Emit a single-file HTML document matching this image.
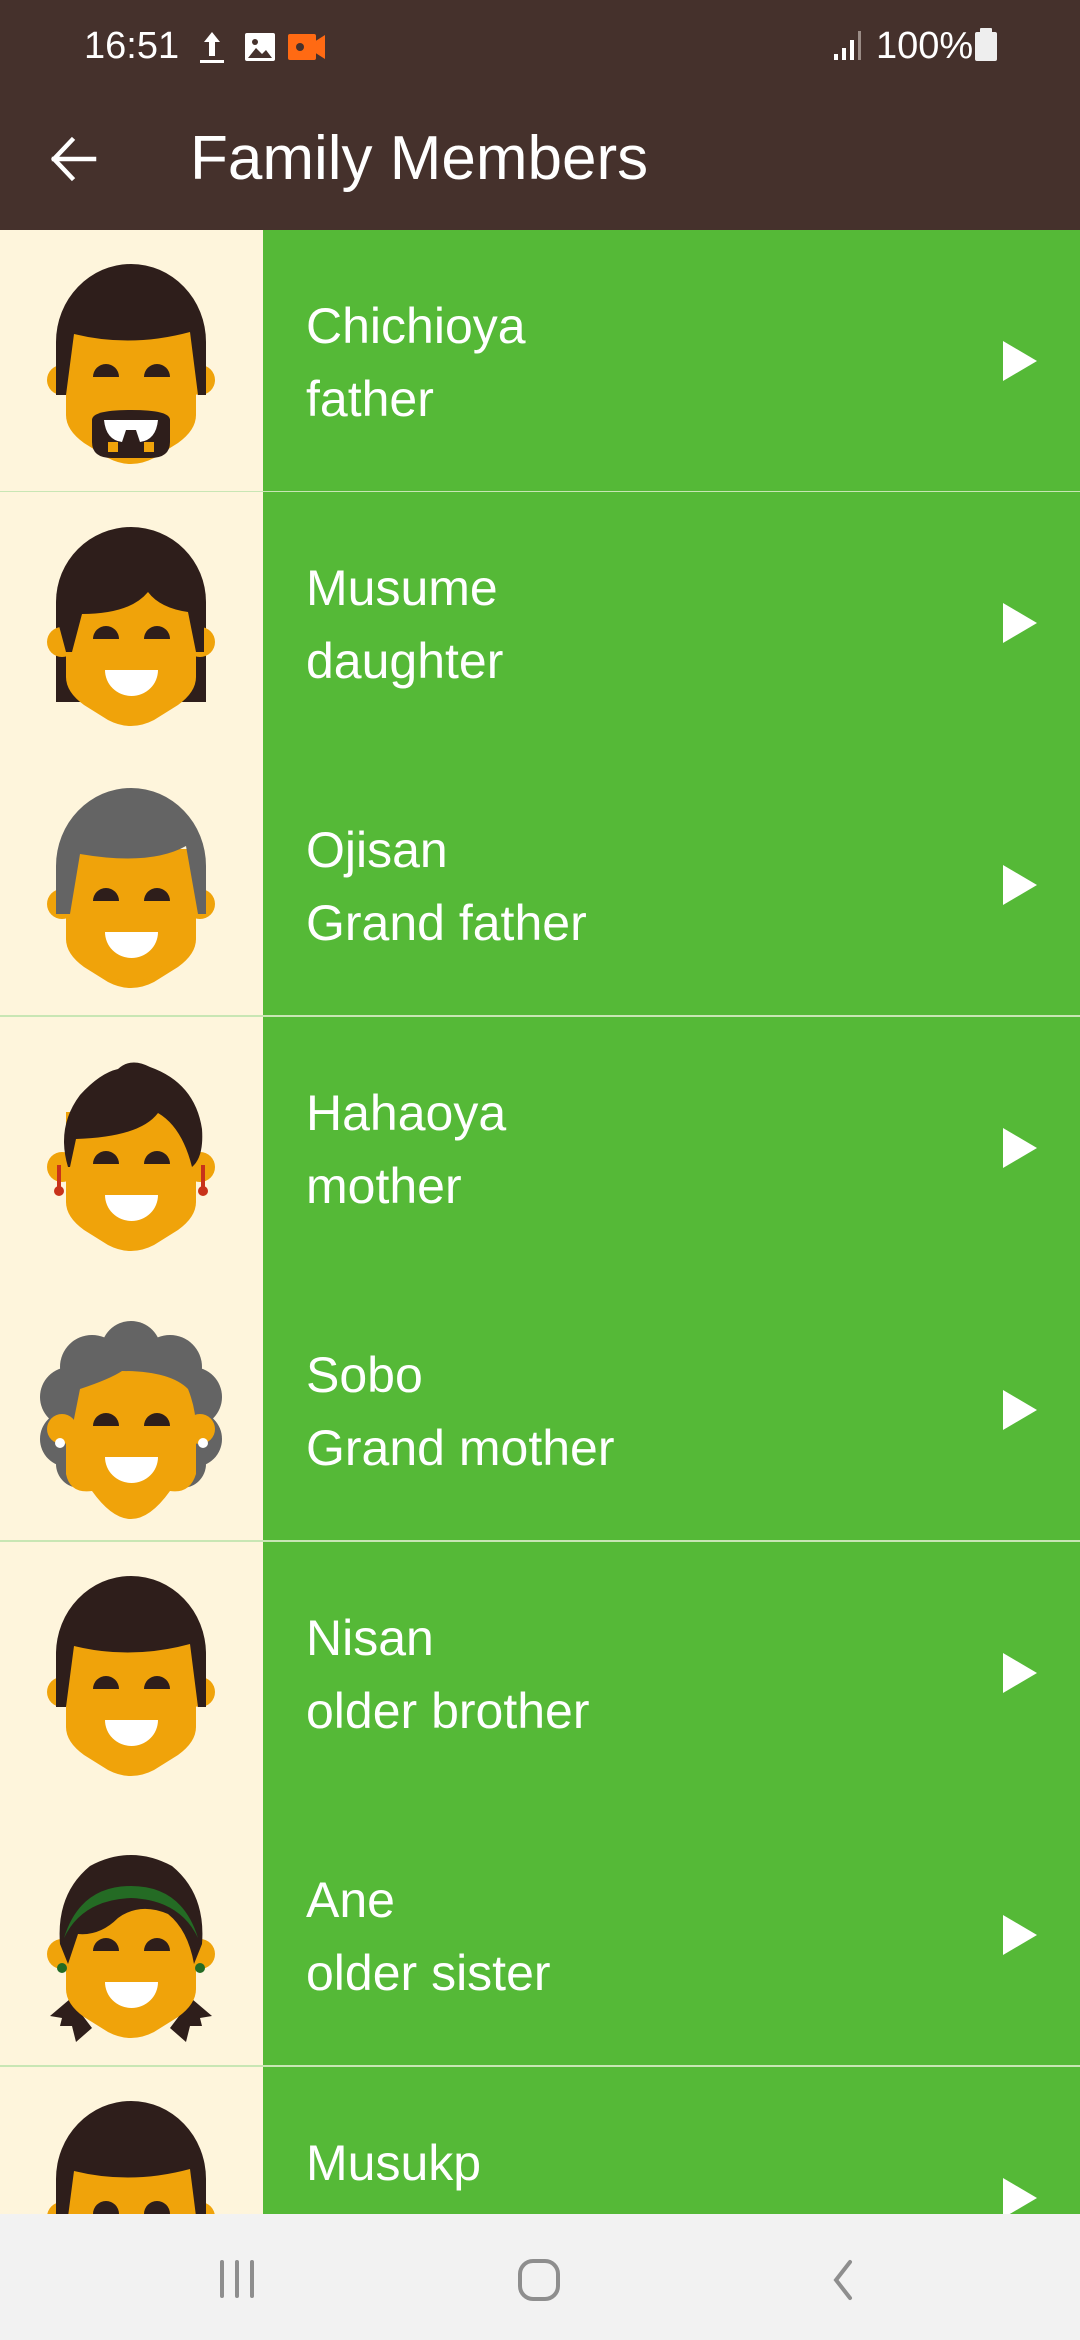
<!DOCTYPE html>
<html><head><meta charset="utf-8"><style>
*{margin:0;padding:0;box-sizing:border-box}
body{width:1080px;height:2340px;overflow:hidden;background:#fef5dc;font-family:"Liberation Sans",Roboto,sans-serif;position:relative}
.top{position:absolute;left:0;top:0;width:1080px;height:230px;background:#45312c;color:#fff}
.row{position:absolute;left:0;width:1080px;height:263px}
.left{position:absolute;left:0;top:0;width:263px;height:100%;background:#fef5dc}
.right{position:absolute;left:263px;top:0;width:817px;height:100%;background:#55b937}
.t1,.t2{position:absolute;left:306px;color:#fff;font-size:50px;white-space:nowrap}
.t1{top:67px}.t2{top:140px}
.tri{position:absolute;left:1003px;top:111px;width:0;height:0;border-top:20px solid transparent;border-bottom:20px solid transparent;border-left:34px solid #fff}
.div{position:absolute;left:0;bottom:0;width:1080px;height:2px;background:#c8e6b4}
svg.f{position:absolute;left:0;top:0}
.nav{position:absolute;left:0;top:2214px;width:1080px;height:126px;background:#f2f2f2}
</style></head><body>
<div class="top">
 <div style="position:absolute;left:84px;top:25px;font-size:38px;">16:51</div>
 <svg style="position:absolute;left:198px;top:30px" width="28" height="34"><path d="M14 2 L6 12 H11 V26 H17 V12 H22 Z" fill="#fff"/><rect x="2" y="30" width="24" height="3" fill="#fff"/></svg>
 <svg style="position:absolute;left:244px;top:32px" width="32" height="30"><rect x="1" y="1" width="30" height="28" rx="2" fill="#fff"/><path d="M4 26 L12 16 L18 22 L22 18 L28 26 Z" fill="#45312c"/><circle cx="11" cy="10" r="3" fill="#45312c"/></svg>
 <svg style="position:absolute;left:288px;top:34px" width="38" height="26"><rect x="0" y="0" width="28" height="26" rx="2" fill="#ff6a13"/><path d="M26 8 L37 1 V25 L26 18 Z" fill="#ff6a13"/><circle cx="12" cy="13" r="4" fill="#45312c"/></svg>
 <svg style="position:absolute;left:832px;top:30px" width="32" height="32"><rect x="2" y="24" width="4" height="6" fill="#fff"/><rect x="10" y="18" width="4" height="12" fill="#fff"/><rect x="18" y="10" width="4" height="20" fill="#fff"/><rect x="26" y="1" width="3" height="29" fill="#9a8c86"/></svg>
 <div style="position:absolute;left:876px;top:25px;font-size:38px;">100%</div>
 <svg style="position:absolute;left:974px;top:26px" width="24" height="36"><rect x="6" y="2" width="12" height="6" rx="1" fill="#eee"/><rect x="1" y="6" width="22" height="29" rx="2" fill="#eee"/></svg>
 <svg style="position:absolute;left:50px;top:136px" width="48" height="46"><path d="M22 4 L4 23 L22 42 M4 23 H44" stroke="#fff" stroke-width="4.5" fill="none" stroke-linecap="square"/></svg>
 <div style="position:absolute;left:190px;top:123px;font-size:62px;">Family Members</div>
</div>

<svg width="0" height="0" style="position:absolute">
 <defs>
  <g id="base">
   <circle cx="62" cy="150" r="15" fill="#f0a30a"/><circle cx="200" cy="150" r="15" fill="#f0a30a"/>
   <path d="M66,95 L66,185 Q66,200 84,213 L108,228 Q131,240 154,228 L178,213 Q196,200 196,185 L196,95 Z" fill="#f0a30a"/>
   <path d="M93,147 A13,13 0 0 1 119,147 Z M144,147 A13,13 0 0 1 170,147 Z" fill="#2e1e1b"/>
  </g>
  <path id="mouth" d="M105,178 H158 A26.5,26 0 0 1 105,178 Z" fill="#fff"/>
  <g id="boyhair"><path d="M56,165 L56,112 A75,78 0 0 1 206,112 L206,165 L198,165 L190,102 Q131,118 74,104 L66,165 Z" fill="#2e1e1b"/></g>
 </defs>
</svg>

<div class="row" style="top:230px"><div class="left"></div><div class="right"></div>
<svg class="f" width="263" height="263"><use href="#base"/><use href="#boyhair"/>
<path d="M92,190 Q92,180 131,180 Q170,180 170,190 L170,212 Q170,228 150,228 L112,228 Q92,228 92,212 Z" fill="#2e1e1b"/>
<path d="M104,190 H158 Q156,210 140,212 L136,200 L126,200 L122,212 Q106,210 104,190 Z" fill="#fff"/>
<path d="M108,212 L108,222 L118,222 L118,212 Z M144,212 L144,222 L154,222 L154,212 Z" fill="#f0a30a"/></svg>
<div class="t1">Chichioya</div><div class="t2">father</div><div class="tri"></div><div class="div"></div></div>

<div class="row" style="top:492px"><div class="left"></div><div class="right"></div>
<svg class="f" width="263" height="263"><path d="M56,210 L56,110 A75,75 0 0 1 206,110 L206,210 Z" fill="#2e1e1b"/><use href="#base"/>
<path d="M58,130 L58,110 A73,73 0 0 1 204,110 L204,160 L196,160 L188,120 Q160,116 148,100 Q130,122 82,122 L72,160 L66,160 Z" fill="#2e1e1b"/><use href="#mouth"/></svg>
<div class="t1">Musume</div><div class="t2">daughter</div><div class="tri"></div></div>

<div class="row" style="top:754px"><div class="left"></div><div class="right"></div>
<svg class="f" width="263" height="263"><use href="#base"/>
<path d="M56,160 L56,112 A75,78 0 0 1 206,112 L206,160 L198,160 L186,92 Q150,112 80,100 L70,160 Z" fill="#646464"/>
<path d="M66,180 Q66,210 100,212 L112,222 Q131,236 150,222 L162,212 Q196,210 196,180 Z" fill="#f0a30a"/><use href="#mouth"/></svg>
<div class="t1">Ojisan</div><div class="t2">Grand father</div><div class="tri"></div><div class="div"></div></div>

<div class="row" style="top:1017px"><div class="left"></div><div class="right"></div>
<svg class="f" width="263" height="263"><use href="#base"/>
<path d="M68,150 Q56,110 80,78 Q100,56 118,52 Q131,40 150,50 Q195,66 202,112 Q204,140 192,150 Q182,110 158,96 Q140,120 76,122 L70,150 Z" fill="#2e1e1b"/>
<rect x="57" y="148" width="4" height="26" fill="#c8321a"/><circle cx="59" cy="174" r="5" fill="#c8321a"/>
<rect x="201" y="148" width="4" height="26" fill="#c8321a"/><circle cx="203" cy="174" r="5" fill="#c8321a"/><use href="#mouth"/></svg>
<div class="t1">Hahaoya</div><div class="t2">mother</div><div class="tri"></div></div>

<div class="row" style="top:1279px"><div class="left"></div><div class="right"></div>
<svg class="f" width="263" height="263">
<g fill="#646464"><circle cx="131" cy="72" r="30"/><circle cx="92" cy="88" r="32"/><circle cx="170" cy="88" r="32"/><circle cx="70" cy="118" r="30"/><circle cx="192" cy="118" r="30"/><circle cx="68" cy="160" r="28"/><circle cx="194" cy="160" r="28"/><circle cx="80" cy="185" r="24"/><circle cx="182" cy="185" r="24"/><rect x="70" y="80" width="122" height="70"/></g>
<circle cx="62" cy="150" r="15" fill="#f0a30a"/><circle cx="200" cy="150" r="15" fill="#f0a30a"/>
<path d="M72,150 L80,110 Q110,100 122,92 Q170,92 188,110 Q196,130 196,150 L196,195 Q190,215 170,212 Q150,240 131,240 Q112,240 92,212 Q70,215 66,195 L66,150 Z" fill="#f0a30a"/>
<path d="M93,147 A13,13 0 0 1 119,147 Z M144,147 A13,13 0 0 1 170,147 Z" fill="#2e1e1b"/>
<circle cx="60" cy="164" r="5" fill="#fff"/><circle cx="203" cy="164" r="5" fill="#fff"/><use href="#mouth"/></svg>
<div class="t1">Sobo</div><div class="t2">Grand mother</div><div class="tri"></div><div class="div"></div></div>

<div class="row" style="top:1542px"><div class="left"></div><div class="right"></div>
<svg class="f" width="263" height="263"><use href="#base"/><use href="#boyhair"/><use href="#mouth"/></svg>
<div class="t1">Nisan</div><div class="t2">older brother</div><div class="tri"></div></div>

<div class="row" style="top:1804px"><div class="left"></div><div class="right"></div>
<svg class="f" width="263" height="263">
<path d="M70,195 L50,212 L62,214 L60,222 L72,222 L76,238 L92,224 Z M192,195 L212,212 L200,214 L202,222 L190,222 L186,238 L170,224 Z" fill="#2e1e1b"/>
<use href="#base"/>
<path d="M68,160 L60,140 Q56,90 90,62 Q131,40 172,62 Q206,90 202,140 L194,160 Q188,126 168,110 Q140,98 118,114 Q100,132 78,130 Z" fill="#2e1e1b"/>
<path d="M64,134 Q80,82 131,82 Q182,82 198,134 Q180,96 131,94 Q82,96 64,134 Z" fill="#246b24"/>
<circle cx="62" cy="164" r="5" fill="#246b24"/><circle cx="200" cy="164" r="5" fill="#246b24"/><use href="#mouth"/></svg>
<div class="t1">Ane</div><div class="t2">older sister</div><div class="tri"></div><div class="div"></div></div>

<div class="row" style="top:2067px"><div class="left"></div><div class="right"></div>
<svg class="f" width="263" height="263"><use href="#base"/><use href="#boyhair"/><use href="#mouth"/></svg>
<div class="t1">Musukp</div><div class="t2">son</div><div class="tri"></div></div>

<div class="nav">
 <svg style="position:absolute;left:216px;top:44px" width="44" height="44"><g stroke="#8e8e8e" stroke-width="4" stroke-linecap="round"><path d="M6 4 V38 M21 4 V38 M36 4 V38"/></g></svg>
 <svg style="position:absolute;left:515px;top:44px" width="48" height="46"><rect x="5" y="3" width="38" height="38" rx="13" fill="none" stroke="#8e8e8e" stroke-width="4"/></svg>
 <svg style="position:absolute;left:826px;top:44px" width="32" height="44"><path d="M24 4 L10 22 L24 40" stroke="#8e8e8e" stroke-width="4" fill="none" stroke-linecap="round"/></svg>
</div>
</body></html>
